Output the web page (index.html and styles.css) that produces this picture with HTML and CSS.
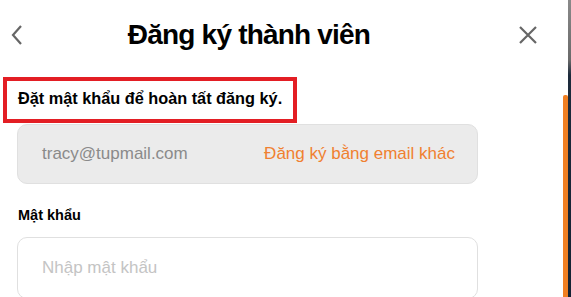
FILE: index.html
```html
<!DOCTYPE html>
<html lang="vi">
<head>
    <meta charset="UTF-8">
    <meta name="viewport" content="width=device-width, initial-scale=1.0">
    <title>Đăng ký thành viên</title>
    <link rel="stylesheet" href="styles.css">
</head>
<body>
    <main class="page">
        <div class="modal">
            <div class="content">
                <header class="header">
                    <a class="iconBtn back">
                        <svg width="14" height="22" viewBox="0 0 14 22"><path d="M11 2 L3 11 L11 20" fill="none" stroke="#666" stroke-width="2.2"/></svg>
                    </a>
                    <h1 class="title">Đăng ký thành viên</h1>
                    <a class="iconBtn close">
                        <svg width="20" height="20" viewBox="0 0 20 20"><path d="M2 2 L18 18 M18 2 L2 18" fill="none" stroke="#666" stroke-width="2.2"/></svg>
                    </a>
                </header>

                <div class="notice">Đặt mật khẩu để hoàn tất đăng ký.</div>

                <div class="form">
                    <div class="emailBox">
                        <span class="email">tracy@tupmail.com</span>
                        <a class="change">Đăng ký bằng email khác</a>
                    </div>

                    <label for="pw" class="label">Mật khẩu</label>
                    <input type="password" id="pw" class="inputBox" placeholder="Nhập mật khẩu">
                </div>
            </div>
            <div class="scroll">
                <div class="thumb"></div>
            </div>
        </div>
        <div class="backdrop"></div>
    </main>
</body>
</html>
```

FILE: styles.css
```css
body {
    background-color: #fff;
    font-family: "Liberation Sans", Arial, sans-serif;
    padding: 0;
    margin: 0;
}

.page {
    display: flex;
    flex-direction: row;
    height: 297px;
    overflow: hidden;
}

.modal {
    flex: 1;
    display: flex;
    flex-direction: row;
    background: #fff;
}

.content {
    flex: 1;
}

.header {
    display: flex;
    align-items: center;
    justify-content: space-between;
    height: 70px;
    padding: 0 25px 0 10px;
}

.iconBtn {
    display: flex;
    align-items: center;
    cursor: pointer;
}

.title {
    margin: 0 44px 0 0;
    font-size: 28px;
    letter-spacing: -0.8px;
    font-weight: bold;
    color: #000;
}

.notice {
    width: 265px;
    margin: 7px 0 0 3px;
    padding: 8px 10px 11px 11px;
    border: 4px solid #e31e24;
    font-size: 16.3px;
    font-weight: bold;
    color: #000;
}

.form {
    width: 461px;
    margin-left: 17px;
}

.emailBox {
    display: flex;
    justify-content: space-between;
    align-items: center;
    height: 58px;
    margin-top: 1px;
    padding: 0 22px 0 24px;
    background-color: #ebebeb;
    border: 1px solid #e0e0e0;
    border-radius: 10px;
    font-size: 17px;
}

.email {
    color: #8a8a8a;
}

.change {
    color: #f08030;
    cursor: pointer;
}

.label {
    display: block;
    margin: 23px 0 14px 1px;
    font-size: 14.5px;
    font-weight: bold;
    color: #000;
}

.inputBox {
    box-sizing: border-box;
    width: 100%;
    height: 62px;
    padding: 0 24px;
    border: 1px solid #e0e0e0;
    border-radius: 10px;
    font-family: inherit;
    font-size: 17px;
    outline: none;
}

.inputBox::placeholder {
    color: #c4c4c4;
}

.scroll {
    width: 5px;
    padding-top: 95px;
}

.thumb {
    height: 100%;
    background: #f07f22;
    border-radius: 2px 2px 0 0;
}

.backdrop {
    width: 3px;
    background: linear-gradient(#8a8a8a, #6a6a6a 60px, #1d2b3c 75px, #142233);
}
```
